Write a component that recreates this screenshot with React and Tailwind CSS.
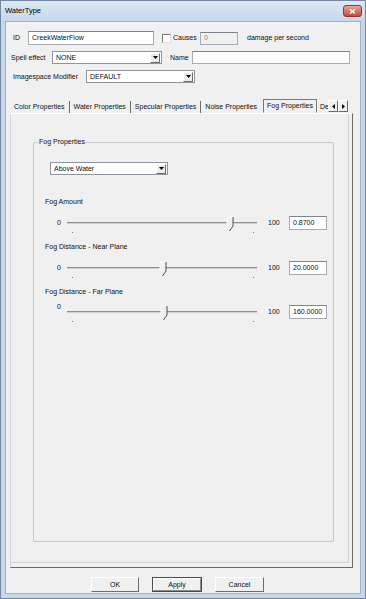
import React from 'react';

const font = "font-['Liberation_Sans',Arial,sans-serif]";

function TextBox({ value, className = '', disabled }) {
  return (
    <div
      className={`flex items-center pl-[3px] border border-[#a6acb3] border-t-[#7d848c] ${
        disabled ? 'bg-[#f0f0f0] text-[#8c8c8c]' : 'bg-white'
      } ${className}`}
    >
      {value}
    </div>
  );
}

function DropDown({ value, className = '' }) {
  return (
    <div className={`h-[13px] flex items-center justify-between bg-white border border-[#8f959c] ${className}`}>
      <span className="pl-[3px]">{value}</span>
      <div className="w-[10px] h-[10px] mr-[1px] flex items-center justify-center bg-[#ececec] border border-t-white border-l-white border-r-[#6e6e6e] border-b-[#6e6e6e]">
        <svg width="5" height="3" viewBox="0 0 5 3">
          <path d="M0 0H5L2.5 3Z" fill="#000" />
        </svg>
      </div>
    </div>
  );
}

function Slider({ thumb, value, raisedZero }) {
  return (
    <div className="flex items-center h-[14px] pl-[23px]">
      <span className={`w-[10px] ${raisedZero ? 'relative -top-[5px]' : ''}`}>0</span>
      <svg width="190" height="14" viewBox="0 0 190 14" className="overflow-visible">
        <rect x="0" y="6" width="190" height="1" fill="#8e8e8e" />
        <rect x="0" y="7" width="190" height="1" fill="#d2d2d2" />
        <rect x="5" y="16" width="1" height="1" fill="#7c7c7c" />
        <rect x="186" y="16" width="1" height="1" fill="#7c7c7c" />
        <polygon
          points={`${thumb - 6},1 ${thumb},1 ${thumb},10 ${thumb - 3},14.5 ${thumb - 6},10`}
          fill="#f0f0f0"
        />
        <path d={`M${thumb - 6} 10 V1 H${thumb}`} stroke="#ffffff" fill="none" />
        <path d={`M${thumb} 1 V10 L${thumb - 3.5} 15`} stroke="#4f4f4f" fill="none" />
      </svg>
      <span className="ml-[11px] w-[21px]">100</span>
      <TextBox value={value} className="w-[38px] h-[14px]" />
    </div>
  );
}

function Tab({ label, border = true }) {
  return (
    <div className={`h-[12px] px-[4px] flex items-center ${border ? 'border-r border-[#6d6d6d]' : ''}`}>
      {label}
    </div>
  );
}

function ScrollArrow({ dir }) {
  return (
    <div className="w-[10px] h-[12px] flex items-center justify-center bg-[#f0f0f0] border border-t-white border-l-white border-r-[#6a6a6a] border-b-[#6a6a6a]">
      <svg width="3" height="5" viewBox="0 0 3 5">
        <path d={dir === 'left' ? 'M3 0V5L0 2.5Z' : 'M0 0V5L3 2.5Z'} fill="#000" />
      </svg>
    </div>
  );
}

function DialogButton({ label, width, isDefault }) {
  if (isDefault) {
    return (
      <div className={`${width} h-[15px] border border-[#4a4a4a]`}>
        <div className="h-full flex items-center justify-center bg-[#f0f0f0] border border-t-white border-l-white border-r-[#8a8a8a] border-b-[#8a8a8a]">
          {label}
        </div>
      </div>
    );
  }
  return (
    <div
      className={`${width} h-[15px] flex items-center justify-center bg-[#f0f0f0] border border-t-white border-l-white border-r-[#6c6c6c] border-b-[#6c6c6c]`}
    >
      {label}
    </div>
  );
}

export default function App() {
  return (
    <div
      className={`w-[366px] h-[599px] flex flex-col bg-[#c6d7ea] border border-[#7588a3] text-[7px] leading-[8px] text-[#0f0f0f] overflow-hidden ${font}`}
    >
      <div className="h-[20px] flex items-center justify-between pl-[4px] pr-[3px] bg-gradient-to-b from-[#dde8f4] to-[#c6d7ea]">
        <span className="text-[7.5px] text-black">WaterType</span>
        <div className="w-[19px] h-[12px] rounded-[3px] border border-[#8e3a33] bg-gradient-to-b from-[#e6a59a] to-[#c4473b] flex items-center justify-center">
          <svg width="7" height="5" viewBox="0 0 7 5">
            <path d="M1 0.5L6 4.5M6 0.5L1 4.5" stroke="#fff" strokeWidth="1.4" />
          </svg>
        </div>
      </div>

      <div className="flex-1 mx-[4px] mb-[4px] bg-[#f0f0f0] border border-[#9fb3cb] flex flex-col">
        <div className="mt-[9px] h-[14px] flex items-center">
          <span className="w-[22px] pl-[7px]">ID</span>
          <TextBox value="CreekWaterFlow" className="w-[126px] h-[14px]" />
          <div className="ml-[8px] w-[9px] h-[9px] bg-white border border-[#7a7a7a] border-r-[#dedede] border-b-[#dedede]" />
          <span className="ml-[2px] w-[27px]">Causes</span>
          <TextBox value="0" disabled className="w-[38px] h-[13px]" />
          <span className="ml-[9px]">damage per second</span>
        </div>

        <div className="mt-[6px] h-[13px] flex items-center">
          <span className="w-[46px] pl-[5px]">Spell effect</span>
          <DropDown value="NONE" className="w-[110px]" />
          <span className="w-[30px] pl-[8px]">Name</span>
          <TextBox value="" className="w-[158px] h-[13px]" />
        </div>

        <div className="mt-[6px] h-[13px] flex items-center">
          <span className="w-[80px] pl-[7px]">Imagespace Modifier</span>
          <DropDown value="DEFAULT" className="w-[109px]" />
        </div>

        <div className="mt-[16px] ml-[4px] h-[14px] flex items-end">
          <div className="w-[318px] flex items-end whitespace-nowrap">
            <Tab label="Color Properties" />
            <Tab label="Water Properties" />
            <Tab label="Specular Properties" />
            <div className="h-[12px] pl-[4px] pr-[6px] flex items-center">Noise Properties</div>
            <div className="h-[14px] px-[3px] flex items-center border border-[#7a7a7a] border-b-[#f0f0f0]">
              Fog Properties
            </div>
            <div className="h-[12px] pl-[3px] flex items-center">De</div>
          </div>
          <div className="flex mb-[1px]">
            <ScrollArrow dir="left" />
            <ScrollArrow dir="right" />
          </div>
        </div>

        <div className="ml-[4px] w-[343px] h-[455px] border border-t-[#ffffff] border-l-[#d6d6d6] border-r-[#6a6a6a] border-b-[#6a6a6a]">
          <div className="h-[449px] mr-[3px] border-r border-b border-[#d4d4d4] pt-[24px]">
            <fieldset className="ml-[22px] w-[301px] h-[404px] border border-[#c9c9c9] rounded-[2px]">
              <legend className="ml-[4px] px-[1px]">Fog Properties</legend>
              <DropDown value="Above Water" className="ml-[16px] mt-[16px] w-[118px]" />
              <div className="ml-[11px] mt-[23px]">Fog Amount</div>
              <div className="mt-[10px]">
                <Slider thumb={166} value="0.8700" />
              </div>
              <div className="ml-[11px] mt-[13px]">Fog Distance - Near Plane</div>
              <div className="mt-[10px]">
                <Slider thumb={99} value="20.0000" />
              </div>
              <div className="ml-[11px] mt-[13px]">Fog Distance - Far Plane</div>
              <div className="mt-[9px]">
                <Slider thumb={100} value="160.0000" raisedZero />
              </div>
            </fieldset>
          </div>
        </div>

        <div className="mt-[9px] ml-[85px] flex gap-[13px]">
          <DialogButton label="OK" width="w-[48px]" />
          <DialogButton label="Apply" width="w-[50px]" isDefault />
          <DialogButton label="Cancel" width="w-[49px]" />
        </div>
      </div>
    </div>
  );
}
